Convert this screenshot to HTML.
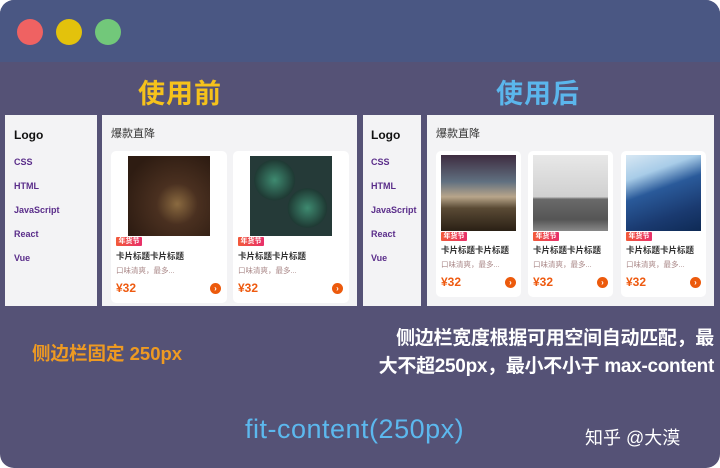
<!DOCTYPE html>
<html><head><meta charset="utf-8"><style>
*{margin:0;padding:0;box-sizing:border-box}
body{width:720px;height:468px;background:#fff;overflow:hidden;font-family:"Liberation Sans","Noto Sans CJK SC",sans-serif}
#w{position:absolute;left:0;top:0;width:720px;height:468px;border-radius:14px;background:#555276;overflow:hidden}
#tb{position:absolute;left:0;top:0;width:720px;height:62px;background:#4a5783}
.dot{position:absolute;top:19px;width:26px;height:26px;border-radius:50%}
.a{position:absolute}
.panel{position:absolute;background:#f3f3f5}
.side div{position:absolute;font-size:9px;font-weight:bold;color:#5a2d8a}
.card{position:absolute;background:#fff;border-radius:5px}
.img{position:absolute}
.tag{position:absolute;width:26px;height:9px;background:linear-gradient(90deg,#f25a3a,#e8306a);color:#fff;font-size:7px;line-height:9px;text-align:center;font-weight:bold;border-radius:1px}
.tt{position:absolute;font-size:8.5px;color:#333;font-weight:bold;white-space:nowrap}
.ds{position:absolute;font-size:7.5px;color:#a88;white-space:nowrap}
.pr{position:absolute;font-size:12px;color:#ee5a10;font-weight:bold}
.ar{position:absolute;width:11px;height:11px;border-radius:50%;background:#ec5a0c;color:#fff;font-size:8px;line-height:11px;text-align:center;font-weight:bold}
</style></head><body>
<div id="w">
<div id="tb"></div>
<div class="dot" style="left:17px;background:#ef6262"></div>
<div class="dot" style="left:56px;background:#e3c20c"></div>
<div class="dot" style="left:95px;background:#72c87a"></div>

<div class="a" style="left:138px;top:72px;font-size:27px;font-weight:bold;color:#f5c21c;letter-spacing:1px">使用前</div>
<div class="a" style="left:496px;top:72px;font-size:27px;font-weight:bold;color:#5bb6ec;letter-spacing:1px">使用后</div>

<div class="panel side" style="left:5px;top:115px;width:92px;height:191px">
<div style="left:9px;top:13px;font-size:12px;color:#111">Logo</div>
<div style="left:9px;top:42px">CSS</div>
<div style="left:9px;top:66px">HTML</div>
<div style="left:9px;top:90px">JavaScript</div>
<div style="left:9px;top:114px">React</div>
<div style="left:9px;top:138px">Vue</div>
</div>
<div class="panel" style="left:102px;top:115px;width:255px;height:191px">
<div class="a" style="left:9px;top:10px;font-size:11px;color:#333">爆款直降</div>
</div>

<div class="panel side" style="left:363px;top:115px;width:58px;height:191px">
<div style="left:8px;top:13px;font-size:12px;color:#111">Logo</div>
<div style="left:8px;top:42px">CSS</div>
<div style="left:8px;top:66px">HTML</div>
<div style="left:8px;top:90px">JavaScript</div>
<div style="left:8px;top:114px">React</div>
<div style="left:8px;top:138px">Vue</div>
</div>
<div class="panel" style="left:427px;top:115px;width:287px;height:191px">
<div class="a" style="left:9px;top:10px;font-size:11px;color:#333">爆款直降</div>
</div>

<div class="card" style="left:111px;top:151px;width:116px;height:152px">
<div class="img" style="left:17px;top:5px;width:82px;height:80px;background:radial-gradient(circle at 60% 60%,#8a6a40 0,#4a3020 30%,#2e1c12 80%)"></div>
<div class="tag" style="left:5px;top:86px">年货节</div>
<div class="tt" style="left:5px;top:99px">卡片标题卡片标题</div>
<div class="ds" style="left:5px;top:114px">口味清爽，最多...</div>
<div class="pr" style="left:5px;top:130px">¥32</div>
<div class="ar" style="left:99px;top:132px">›</div>
</div>
<div class="card" style="left:233px;top:151px;width:116px;height:152px">
<div class="img" style="left:17px;top:5px;width:82px;height:80px;background:radial-gradient(circle at 30% 30%,#3e8a70 0,#1f3a34 25%,transparent 26%),radial-gradient(circle at 70% 65%,#3e8a70 0,#1f3a34 25%,transparent 26%),#253a38"></div>
<div class="tag" style="left:5px;top:86px">年货节</div>
<div class="tt" style="left:5px;top:99px">卡片标题卡片标题</div>
<div class="ds" style="left:5px;top:114px">口味清爽，最多...</div>
<div class="pr" style="left:5px;top:130px">¥32</div>
<div class="ar" style="left:99px;top:132px">›</div>
</div>

<div class="card" style="left:436px;top:151px;width:85px;height:146px">
<div class="img" style="left:5px;top:4px;width:75px;height:76px;background:linear-gradient(180deg,#3e2c40 0,#607080 35%,#b8a58a 55%,#5a4a35 70%,#2a2015 100%)"></div>
<div class="tag" style="left:5px;top:81px">年货节</div>
<div class="tt" style="left:5px;top:93px">卡片标题卡片标题</div>
<div class="ds" style="left:5px;top:108px">口味清爽，最多...</div>
<div class="pr" style="left:5px;top:124px">¥32</div>
<div class="ar" style="left:69px;top:126px">›</div>
</div>
<div class="card" style="left:528px;top:151px;width:85px;height:146px">
<div class="img" style="left:5px;top:4px;width:75px;height:76px;background:linear-gradient(180deg,#e8e8e8 0,#d0d0d0 55%,#6a6a6a 58%,#555 85%,#888 100%)"></div>
<div class="tag" style="left:5px;top:81px">年货节</div>
<div class="tt" style="left:5px;top:93px">卡片标题卡片标题</div>
<div class="ds" style="left:5px;top:108px">口味清爽，最多...</div>
<div class="pr" style="left:5px;top:124px">¥32</div>
<div class="ar" style="left:69px;top:126px">›</div>
</div>
<div class="card" style="left:621px;top:151px;width:85px;height:146px">
<div class="img" style="left:5px;top:4px;width:75px;height:76px;background:linear-gradient(160deg,#d8e8f4 0,#a8cce8 25%,#2a5a9a 45%,#1a3a70 75%,#0e2a55 100%)"></div>
<div class="tag" style="left:5px;top:81px">年货节</div>
<div class="tt" style="left:5px;top:93px">卡片标题卡片标题</div>
<div class="ds" style="left:5px;top:108px">口味清爽，最多...</div>
<div class="pr" style="left:5px;top:124px">¥32</div>
<div class="ar" style="left:69px;top:126px">›</div>
</div>

<div class="a" style="left:32px;top:340px;font-size:18.5px;font-weight:bold;color:#ee9a22">侧边栏固定 250px</div>
<div class="a" style="right:6px;top:325px;font-size:19px;font-weight:bold;color:#fff;text-align:right;line-height:28px;white-space:nowrap;letter-spacing:-0.3px">侧边栏宽度根据可用空间自动匹配，最<br>大不超250px，最小不小于 max-content</div>
<div class="a" style="left:245px;top:414px;font-size:27px;color:#5cb8ee;letter-spacing:0.5px">fit-content(250px)</div>
<div class="a" style="left:585px;top:424px;font-size:18px;color:#fff">知乎 @大漠</div>
</div>
</body></html>
